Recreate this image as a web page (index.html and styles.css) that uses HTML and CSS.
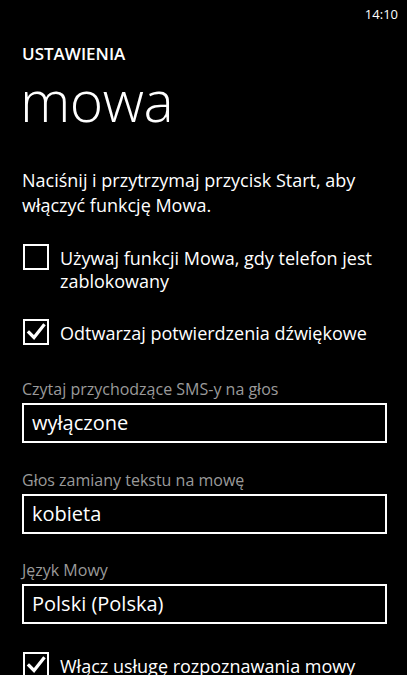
FILE: index.html
```html
<!DOCTYPE html>
<html>
<head>
    <title>Ustawienia - mowa</title>
    <link rel="stylesheet" href="styles.css">
</head>
<body>
    <div class="status-bar">
        <span class="clock">14:10</span>
    </div>

    <div class="page">
        <div class="app-title">USTAWIENIA</div>
        <h1 class="page-title">mowa</h1>

        <p class="intro">Naciśnij i przytrzymaj przycisk Start, aby włączyć funkcję Mowa.</p>

        <label class="check first">
            <span class="check-box"></span>
            <span class="check-text">Używaj funkcji Mowa, gdy telefon jest zablokowany</span>
        </label>

        <label class="check">
            <span class="check-box">
                <svg viewBox="0 0 22 22" width="22" height="22"><path d="M4 11.5 L9 16.5 L18.5 4.5" fill="none" stroke="#fff" stroke-width="3.2" stroke-linecap="square"/></svg>
            </span>
            <span class="check-text">Odtwarzaj potwierdzenia dźwiękowe</span>
        </label>

        <div class="field first">
            <div class="field-label">Czytaj przychodzące SMS-y na głos</div>
            <div class="picker">wyłączone</div>
        </div>

        <div class="field">
            <div class="field-label">Głos zamiany tekstu na mowę</div>
            <div class="picker">kobieta</div>
        </div>

        <div class="field">
            <div class="field-label">Język Mowy</div>
            <div class="picker">Polski (Polska)</div>
        </div>

        <label class="check last">
            <span class="check-box">
                <svg viewBox="0 0 22 22" width="22" height="22"><path d="M4 11.5 L9 16.5 L18.5 4.5" fill="none" stroke="#fff" stroke-width="3.2" stroke-linecap="square"/></svg>
            </span>
            <span class="check-text">Włącz usługę rozpoznawania mowy</span>
        </label>
    </div>
</body>
</html>
```

FILE: styles.css
```css
body {
    margin: 0;
    background-color: #000;
    color: #fff;
    font-family: "Open Sans", "Noto Sans", sans-serif;
    overflow: hidden;
    height: 675px;
}

.status-bar {
    display: flex;
    justify-content: flex-end;
    height: 30px;
    padding-right: 9px;
}

.clock {
    font-size: 13px;
    line-height: 30px;
    margin-top: -1px;
}

.page {
    padding: 0 20px 0 22px;
}

.app-title {
    font-size: 17px;
    font-weight: 600;
    line-height: 24px;
    margin-top: 12px;
}

.page-title {
    font-size: 57px;
    font-weight: 300;
    line-height: 60px;
    margin: 4px 0 0 -2px;
    letter-spacing: -0.5px;
}

.intro {
    font-size: 18px;
    line-height: 25px;
    margin: 38px 0 0;
}

.check {
    display: flex;
    align-items: flex-start;
    gap: 11px;
    margin-top: 26px;
}

.check.first {
    margin-top: 26px;
}

.check-box {
    flex: none;
    width: 22px;
    height: 22px;
    border: 2px solid #fff;
    margin-left: 1px;
}

.check-box svg {
    display: block;
}

.check-text {
    font-size: 18px;
    line-height: 23px;
    margin-top: 3px;
}

.field {
    margin-top: 26.5px;
}

.field.first {
    margin-top: 34px;
}

.field-label {
    font-size: 16px;
    line-height: 20px;
    color: #9a9a9a;
}

.picker {
    margin-top: 4px;
    height: 36px;
    border: 2px solid #fff;
    font-size: 20px;
    line-height: 36px;
    padding-left: 8px;
}

.check.last {
    margin-top: 28px;
}
```
